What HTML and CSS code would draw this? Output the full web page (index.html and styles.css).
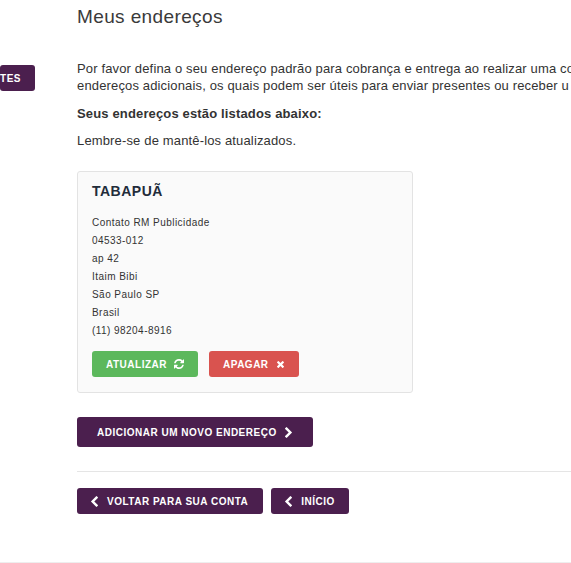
FILE: index.html
```html
<!DOCTYPE html>
<html lang="pt-BR">
<head>
<meta charset="utf-8">
<title>Meus endereços</title>
<link rel="stylesheet" href="styles.css">
</head>
<body>
<div class="page">
  <aside class="side">
    <a class="btn side-btn">TES</a>
  </aside>
  <main class="main">
    <h1 class="title">Meus endereços</h1>
    <p class="intro">Por favor defina o seu endereço padrão para cobrança e entrega ao realizar uma co<br>endereços adicionais, os quais podem ser úteis para enviar presentes ou receber u</p>
    <p class="strong">Seus endereços estão listados abaixo:</p>
    <p class="note">Lembre-se de mantê-los atualizados.</p>
    <section class="card">
      <h3 class="card-title">TABAPUÃ</h3>
      <ul class="lines">
        <li>Contato RM Publicidade</li>
        <li>04533-012</li>
        <li>ap 42</li>
        <li>Itaim Bibi</li>
        <li>São Paulo SP</li>
        <li>Brasil</li>
        <li>(11) 98204-8916</li>
      </ul>
      <div class="actions">
        <a class="btn small green">ATUALIZAR
          <svg class="ico" viewBox="0 0 1536 1536"><path fill="#fff" d="M1511 928q0 5-1 7-64 268-268 434.5t-478 166.5q-146 0-282.5-55t-243.5-157l-129 129q-19 19-45 19t-45-19-19-45v-448q0-26 19-45t45-19h448q26 0 45 19t19 45-19 45l-137 137q71 66 161 102t187 36q134 0 250-65t186-179q11-17 53-117 8-23 30-23h192q13 0 22.5 9.5t9.5 22.5zm25-800v448q0 26-19 45t-45 19h-448q-26 0-45-19t-19-45 19-45l138-138q-148-137-349-137-134 0-250 65t-186 179q-11 17-53 117-8 23-30 23h-199q-13 0-22.5-9.5t-9.5-22.5v-7q65-268 270-434.5t480-166.5q146 0 284 55.5t245 156.5l130-129q19-19 45-19t45 19 19 45z"/></svg>
        </a>
        <a class="btn small red">APAGAR
          <svg class="ico x" viewBox="110 62 1188 1188"><path fill="#fff" d="M1298 1018q0 40-28 68l-136 136q-28 28-68 28t-68-28l-294-294-294 294q-28 28-68 28t-68-28l-136-136q-28-28-28-68t28-68l294-294-294-294q-28-28-28-68t28-68l136-136q28-28 68-28t68 28l294 294 294-294q28-28 68-28t68 28l136 136q28 28 28 68t-28 68l-294 294 294 294q28 28 28 68z"/></svg>
        </a>
      </div>
    </section>
    <a class="btn add">ADICIONAR UM NOVO ENDEREÇO
      <svg class="chev" viewBox="90 -192 1036 1612"><path fill="#fff" d="M1107 659l-742 742q-19 19-45 19t-45-19l-166-166q-19-19-19-45t19-45l531-531-531-531q-19-19-19-45t19-45l166-166q19-19 45-19t45 19l742 742q19 19 19 45t-19 45z"/></svg>
    </a>
    <div class="nav">
      <a class="btn back back-long"><svg class="chev flip" viewBox="90 -192 1036 1612"><path fill="#fff" d="M1107 659l-742 742q-19 19-45 19t-45-19l-166-166q-19-19-19-45t19-45l531-531-531-531q-19-19-19-45t19-45l166-166q19-19 45-19t45 19l742 742q19 19 19 45t-19 45z"/></svg>VOLTAR PARA SUA CONTA</a>
      <a class="btn back"><svg class="chev flip" viewBox="90 -192 1036 1612"><path fill="#fff" d="M1107 659l-742 742q-19 19-45 19t-45-19l-166-166q-19-19-19-45t19-45l531-531-531-531q-19-19-19-45t19-45l166-166q19-19 45-19t45 19l742 742q19 19 19 45t-19 45z"/></svg>INÍCIO</a>
    </div>
  </main>
</div>
<footer class="foot"></footer>
</body>
</html>
```
FILE: styles.css
```css
html, body {
  margin: 0;
  height: 563px;
  overflow: hidden;
  background: #fff;
  font-family: "Liberation Sans", Arial, sans-serif;
  color: #333;
}
.page {
  display: flex;
  height: 562px;
  overflow: hidden;
}
.side {
  width: 35px;
  flex: none;
  margin-right: 42px;
  padding-top: 65px;
  display: flex;
  justify-content: flex-end;
  overflow: hidden;
}
.main {
  flex: none;
  width: 494px;
  overflow: hidden;
}
.btn {
  display: inline-flex;
  align-items: center;
  box-sizing: border-box;
  flex: none;
  background: #4b1f4e;
  color: #fff;
  border-radius: 3px;
  font-weight: 700;
  font-size: 10px;
  letter-spacing: .5px;
  white-space: nowrap;
}
.side-btn {
  height: 26px;
  padding: 0 14px 0 0;
}
.title {
  margin: 0;
  padding-top: 5px;
  height: 54px;
  font-weight: 400;
  font-size: 19px;
  line-height: 24px;
  letter-spacing: .38px;
  color: #3a3a3a;
}
.intro, .strong, .note {
  font-size: 13px;
  line-height: 17px;
  margin: 0;
  white-space: nowrap;
  letter-spacing: .15px;
}
.intro { padding-top: 1px; }
.strong { font-weight: 700; margin-top: 11px; }
.note { margin-top: 10px; }
.card {
  box-sizing: border-box;
  width: 336px;
  height: 222px;
  margin-top: 22px;
  padding: 10px 14px 0;
  background: #fafafa;
  border: 1px solid #e3e3e3;
  border-radius: 3px;
}
.card-title {
  margin: 0 0 14px;
  font-size: 14px;
  line-height: 18px;
  letter-spacing: .5px;
  color: #222c3a;
}
.lines {
  list-style: none;
  margin: 0;
  padding: 0;
  font-size: 10px;
  line-height: 18px;
  letter-spacing: .45px;
  color: #333;
}
.actions {
  display: flex;
  gap: 11px;
  margin-top: 11px;
}
.small { height: 26px; padding: 0 14px; }
.green { background: #5cb85c; }
.red { background: #d9534f; padding-right: 15px; }
.ico { width: 10px; height: 10px; margin-left: 7px; }
.ico.x { width: 7px; height: 7px; margin-left: 8px; }
.add {
  height: 30px;
  width: 236px;
  margin-top: 24px;
  padding-left: 20px;
}
.chev { width: 7px; height: 11px; margin-left: 8px; }
.flip { transform: scaleX(-1); margin: 0 9px 0 0; }
.nav {
  display: flex;
  gap: 8px;
  margin-top: 24px;
  padding-top: 16px;
  border-top: 1px solid #e5e5e5;
  width: 494px;
}
.back { height: 26px; padding: 0 14px; }
.back-long { padding-right: 15px; }
.foot {
  height: 1px;
  background: #eee;
}
```
